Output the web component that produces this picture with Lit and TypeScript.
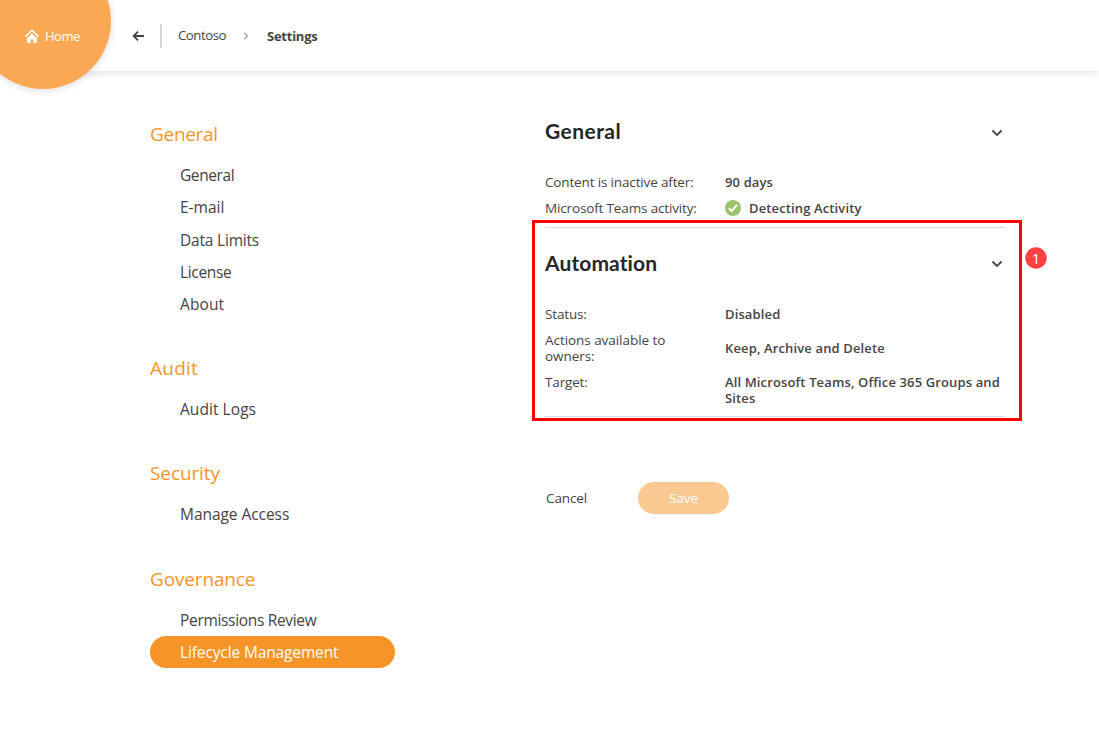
import { LitElement, html, css } from "lit";
import { customElement, state } from "lit/decorators.js";
import { classMap } from "lit/directives/class-map.js";
import { styleMap } from "lit/directives/style-map.js";

interface NavEntry {
  text: string;
  tracking: number;
}

interface NavGroup extends NavEntry {
  items: NavEntry[];
}

const NAV: NavGroup[] = [
  {
    text: "General",
    tracking: -0.3,
    items: [
      { text: "General", tracking: -0.4 },
      { text: "E-mail", tracking: 0 },
      { text: "Data Limits", tracking: -0.2 },
      { text: "License", tracking: -0.35 },
      { text: "About", tracking: 0.1 },
    ],
  },
  { text: "Audit", tracking: 0.25, items: [{ text: "Audit Logs", tracking: 0.06 }] },
  { text: "Security", tracking: -0.1, items: [{ text: "Manage Access", tracking: -0.05 }] },
  {
    text: "Governance",
    tracking: -0.15,
    items: [
      { text: "Permissions Review", tracking: -0.32 },
      { text: "Lifecycle Management", tracking: -0.13 },
    ],
  },
];

const spacing = (e: NavEntry) => styleMap({ letterSpacing: `${e.tracking}px` });

const chevronDown = html`<svg class="chevron" viewBox="0 0 12 8" width="12" height="8">
  <path d="M1.4 1.6 L6 5.9 L10.6 1.6" fill="none" stroke="#4a4a4a" stroke-width="2" />
</svg>`;

@customElement("app-root")
export class AppRoot extends LitElement {
  @state() private active = "Lifecycle Management";

  static styles = css`
    :host {
      display: block;
      position: relative;
      height: 743px;
      overflow: hidden;
      background: #fff;
      color: #444;
      font-family: "Open Sans", "Noto Sans", sans-serif;
      font-size: 13.5px;
    }
    .header {
      display: flex;
      align-items: center;
      box-sizing: border-box;
      height: 71px;
      padding-left: 132px;
      box-shadow: 0 1px 8px rgba(0, 0, 0, 0.14);
    }
    .disc {
      position: absolute;
      left: -25px;
      top: -47px;
      width: 136px;
      height: 136px;
      border-radius: 50%;
      background: #f9a954;
      box-shadow: 0 1px 8px rgba(0, 0, 0, 0.14);
    }
    .home {
      position: absolute;
      left: 25px;
      top: 26px;
      display: flex;
      align-items: center;
      gap: 6px;
      height: 20px;
      color: #fff;
      font-size: 13px;
      letter-spacing: -0.5px;
    }
    .bar {
      width: 2px;
      height: 24px;
      margin: 0 16px 0 15px;
      background: #d5d5d5;
    }
    .parent {
      width: 48px;
      padding-bottom: 1px;
      font-size: 13.2px;
      letter-spacing: -0.45px;
    }
    .crumb-sep {
      margin: 0 18px 0 17px;
    }
    .current {
      font-weight: 700;
      font-size: 13px;
      letter-spacing: -0.25px;
    }
    .body {
      display: flex;
    }
    .nav {
      width: 245px;
      padding: 48px 0 0 150px;
    }
    .group {
      margin-bottom: 32.85px;
    }
    .group-title {
      margin-bottom: 10.03px;
      padding-top: 0.17px;
      line-height: 30px;
      font-size: 19px;
      color: #f79428;
    }
    .item {
      height: 32.2px;
      padding-left: 30px;
      line-height: 32px;
      font-size: 15.5px;
      border-radius: 16px;
    }
    .item.active {
      background: #f79428;
      color: #fff;
    }
    .content {
      width: 460px;
      padding: 25px 0 0 150px;
    }
    .section {
      padding-bottom: 6px;
      border-bottom: 1px solid #dadada;
    }
    .section-head {
      display: flex;
      align-items: center;
      justify-content: space-between;
      height: 73px;
      padding-right: 2px;
    }
    .section-title {
      padding-bottom: 4px;
      font-family: Lato, sans-serif;
      font-weight: 700;
      font-size: 21px;
      font-variant-ligatures: none;
      letter-spacing: 0.45px;
      color: #262626;
    }
    .auto {
      padding-bottom: 5px;
    }
    .auto .section-head {
      height: 71px;
      margin-bottom: 2px;
    }
    .auto .section-title {
      padding-bottom: 2px;
      letter-spacing: 0.1px;
    }
    .row {
      display: flex;
      align-items: center;
      padding: 5px 0;
      line-height: 16px;
    }
    .row.top {
      align-items: flex-start;
    }
    .label {
      width: 180px;
      letter-spacing: -0.15px;
    }
    .label.wrapped {
      letter-spacing: -0.05px;
    }
    .value {
      display: flex;
      align-items: center;
      gap: 8px;
      font-weight: 600;
      font-size: 13px;
      letter-spacing: 0.13px;
    }
    .actions {
      display: flex;
      align-items: center;
      margin-top: 65px;
      padding-left: 1px;
      letter-spacing: -0.1px;
    }
    .cancel {
      width: 92px;
    }
    .save {
      width: 91px;
      height: 32px;
      border-radius: 16px;
      background: #fac992;
      color: #fff;
      line-height: 32px;
      text-align: center;
    }
    .callout {
      position: absolute;
      left: 532px;
      top: 220px;
      width: 484px;
      height: 195px;
      border: 3px solid #f00;
    }
    .badge {
      position: absolute;
      left: 1025px;
      top: 247px;
      width: 22px;
      height: 22px;
      border-radius: 50%;
      background: #ff4043;
      color: #fff;
      font: 15.5px/22px "Open Sans", sans-serif;
      text-align: center;
      transform: scale(0.975);
    }
    svg {
      display: block;
    }
  `;

  render() {
    return html`
      <div class="header">
        <svg width="13" height="12" viewBox="0 0 13 12">
          <path d="M6 1.6 L1.6 6 L6 10.4 M1.8 6 H12" fill="none" stroke="#444" stroke-width="1.8" />
        </svg>
        <div class="bar"></div>
        <span class="parent">Contoso</span>
        <svg class="crumb-sep" width="6" height="8" viewBox="0 0 6 8">
          <path d="M1.2 0.8 L4.4 4 L1.2 7.2" fill="none" stroke="#aaa" stroke-width="1.5" />
        </svg>
        <span class="current">Settings</span>
      </div>
      <div class="disc"></div>
      <div class="home">
        <svg width="14" height="14" viewBox="0 0 14 14">
          <path
            d="M0.9 7.2 L7 1.4 L13.1 7.2"
            fill="none"
            stroke="#fff"
            stroke-width="1.7"
            stroke-linecap="round"
            stroke-linejoin="round"
          />
          <path
            d="M7 4.5 L12 9.2 V13.2 Q12 14 11.2 14 H8.4 V10.4 H5.6 V14 H2.8 Q2 14 2 13.2 V9.2 Z"
            fill="#fff"
          />
        </svg>
        <span>Home</span>
      </div>
      <div class="body">
        <div class="nav">
          ${NAV.map(
            (g) => html`<div class="group">
              <div class="group-title" style=${spacing(g)}>${g.text}</div>
              ${g.items.map(
                (i) => html`<div
                  class=${classMap({ item: true, active: i.text === this.active })}
                  style=${spacing(i)}
                  @click=${() => (this.active = i.text)}
                >${i.text}</div>`,
              )}
            </div>`,
          )}
        </div>
        <div class="content">
          <div class="section">
            <div class="section-head"><div class="section-title">General</div>${chevronDown}</div>
            <div class="row"><div class="label">Content is inactive after:</div><div class="value">90 days</div></div>
            <div class="row">
              <div class="label">Microsoft Teams activity:</div>
              <div class="value">
                <svg width="16" height="16" viewBox="0 0 16 16">
                  <circle cx="8" cy="8" r="8" fill="#9ac36c" />
                  <path d="M3.8 8.3 L6.8 11 L12 4.8" fill="none" stroke="#fff" stroke-width="2" />
                </svg>
                <span>Detecting Activity</span>
              </div>
            </div>
          </div>
          <div class="section auto">
            <div class="section-head"><div class="section-title">Automation</div>${chevronDown}</div>
            <div class="row"><div class="label">Status:</div><div class="value">Disabled</div></div>
            <div class="row">
              <div class="label wrapped">Actions available to<br />owners:</div>
              <div class="value">Keep, Archive and Delete</div>
            </div>
            <div class="row top">
              <div class="label">Target:</div>
              <div class="value"><span>All Microsoft Teams, Office 365 Groups and<br />Sites</span></div>
            </div>
          </div>
          <div class="actions"><span class="cancel">Cancel</span><div class="save">Save</div></div>
        </div>
      </div>
      <div class="callout"></div>
      <div class="badge">1</div>
    `;
  }
}
